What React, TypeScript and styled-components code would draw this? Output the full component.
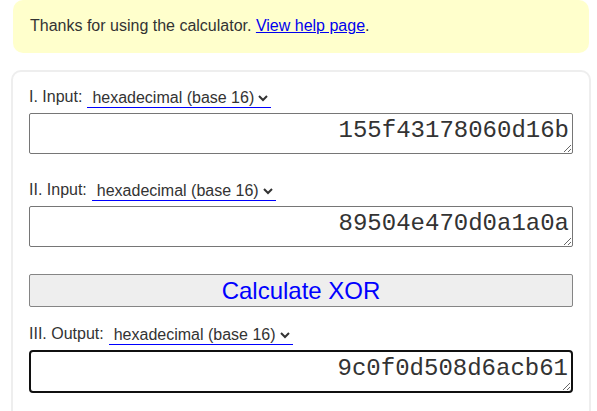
import React from "react";
import styled, { createGlobalStyle } from "styled-components";

const Global = createGlobalStyle`
  html, body { margin: 0; padding: 0; background: #fff; }
  body { font-family: Arial, "Liberation Sans", sans-serif; color: #333; }
`;

const Page = styled.div`
  padding: 0 6px 0 11px;
`;

const Notice = styled.div`
  margin: 0 2px;
  height: 53px;
  box-sizing: border-box;
  background: #ffffcc;
  border-radius: 10px;
  padding: 17px 17px 0;
  font-size: 16px;
  line-height: 18px;
  color: #333;
  a { color: #0000ee; text-decoration: underline; }
`;

const Card = styled.div`
  margin-top: 17px;
  border: 2px solid #eeeeee;
  border-radius: 10px;
  padding: 16px 16px 40px;
  background: #fff;
`;

const Row = styled.div`
  display: flex;
  align-items: flex-end;
  gap: 5px;
  height: 20px;
  font-size: 16px;
  color: #333;
  white-space: nowrap;
`;

const Label = styled.span`
  line-height: 18px;
  padding-bottom: 2px;
`;

const Select = styled.select`
  font-family: Arial, "Liberation Sans", sans-serif;
  font-size: 16px;
  color: #333;
  background: #fff;
  border: 0;
  border-bottom: 1px solid #0000ff;
  border-radius: 0;
  padding: 0 1px;
  height: 20px;
`;

const Area = styled.textarea<{ $focused?: boolean; $gap: number }>`
  display: block;
  box-sizing: border-box;
  width: 100%;
  margin: 5px 0 ${(p) => p.$gap}px;
  height: ${(p) => (p.$focused ? 43 : 41)}px;
  padding: ${(p) => (p.$focused ? "3px 3px" : "3px 3px")};
  font-family: "Liberation Mono", "Courier New", monospace;
  font-size: 24px;
  line-height: normal;
  color: #333;
  text-align: right;
  border: ${(p) => (p.$focused ? "2px solid #101010" : "1px solid #767676")};
  border-radius: ${(p) => (p.$focused ? 4 : 2)}px;
  outline: none;
  background: #fff;
  overflow: hidden;
`;

const Button = styled.button`
  display: block;
  width: 100%;
  height: 33px;
  margin: 0 0 18px;
  box-sizing: border-box;
  background: #eeeeee;
  border: 1px solid #858585;
  border-radius: 2px;
  font-family: Arial, "Liberation Sans", sans-serif;
  font-size: 24px;
  color: #0000ff;
  padding: 0;
  cursor: pointer;
`;

const options = ["binary (base 2)", "octal (base 8)", "decimal (base 10)", "hexadecimal (base 16)"];

function BaseSelect() {
  return (
    <Select defaultValue="hexadecimal (base 16)">
      {options.map((o) => (
        <option key={o}>{o}</option>
      ))}
    </Select>
  );
}

export default function App() {
  return (
    <>
      <Global />
      <Page>
        <Notice>
          Thanks for using the calculator. <a href="#">View help page</a>.
        </Notice>
        <Card>
          <Row>
            <Label>I. Input:</Label>
            <BaseSelect />
          </Row>
          <Area $gap={27} readOnly value="155f43178060d16b" />
          <Row>
            <Label>II. Input:</Label>
            <BaseSelect />
          </Row>
          <Area $gap={27} readOnly value="89504e470d0a1a0a" />
          <Button>Calculate XOR</Button>
          <Row>
            <Label>III. Output:</Label>
            <BaseSelect />
          </Row>
          <Area $gap={10} $focused readOnly value="9c0f0d508d6acb61" />
        </Card>
      </Page>
    </>
  );
}
